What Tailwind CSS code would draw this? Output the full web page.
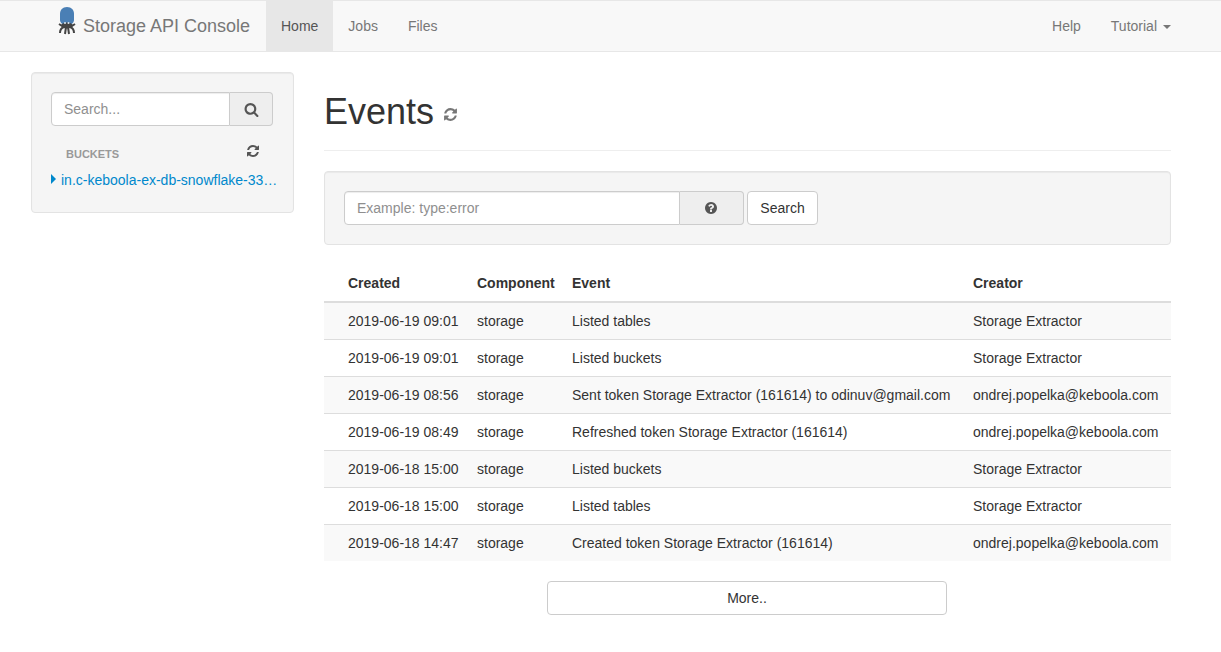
<!DOCTYPE html>
<html lang="en">
<head>
    <meta charset="UTF-8">
    <title>Storage API Console</title>
    <script src="https://cdn.jsdelivr.net/npm/@tailwindcss/browser@4"></script>
</head>
<body class="bg-white text-[#333] text-[14px] leading-[20px] font-['Liberation_Sans',Arial,sans-serif]">

<nav class="h-[52px] bg-[#f8f8f8] border-y border-[#e7e7e7] flex justify-between pl-[50px] pr-[35px] text-[#777]">
    <div class="flex">
        <div class="w-[216px] flex items-center">
            <svg class="w-[20px] h-[30px] ml-[7px] mr-[6px] -mt-[10px] shrink-0" viewBox="0 0 20 30">
                <path d="M10 1c4.500 0 7 3 7 7v6c0 3-3 5-7 5s-7-2-7-5V8c0-4 2.500-7 7-7z" fill="#4a7fb5"/>
                <ellipse cx="10" cy="19.500" rx="6" ry="3" fill="#444"/>
                <circle cx="8" cy="17" r="1" fill="#dde8f2"/>
                <circle cx="11.500" cy="17" r="1" fill="#dde8f2"/>
                <path d="M5 20L2 18M15 20l3-2M7 21C4 22 3 24 3 27M9 21l-1 7M11 21l1 7M13 21c3 1 4 3 4 6" stroke="#444" stroke-width="2" fill="none"/>
            </svg>
            <span class="text-[18px] whitespace-nowrap">Storage API Console</span>
        </div>
        <a class="px-[15px] flex items-center bg-[#e7e7e7] text-[#555]">Home</a>
        <a class="px-[15px] flex items-center">Jobs</a>
        <a class="px-[15px] flex items-center">Files</a>
    </div>
    <div class="flex">
        <a class="px-[15px] flex items-center">Help</a>
        <a class="px-[15px] flex items-center">Tutorial
            <span class="ml-[6px] mt-[2px] border-x-4 border-x-transparent border-t-4 border-t-[#777]"></span>
        </a>
    </div>
</nav>

<div class="flex items-start pt-5 pl-[31px] pr-[50px]">
    <aside class="w-[263px] h-[141px] shrink-0 bg-[#f5f5f5] border border-[#e3e3e3] rounded p-[19px] shadow-[inset_0_1px_1px_rgba(0,0,0,0.05)]">
        <div class="flex h-[34px] w-[222px]">
            <div class="flex-1 bg-white border border-[#ccc] rounded-l px-3 py-[6px] text-[#8f8f8f] shadow-[inset_0_1px_1px_rgba(0,0,0,0.075)]">Search...</div>
            <div class="w-[43px] bg-[#eee] border border-l-0 border-[#ccc] rounded-r flex items-center justify-center">
                <svg class="w-[15px] h-[15px] fill-[#555]" viewBox="0 0 1792 1792"><path d="M1216 832q0-185-131.500-316.500t-316.500-131.500-316.500 131.500-131.500 316.500 131.500 316.500 316.500 131.500 316.500-131.500 131.500-316.500zm512 832q0 52-38 90t-90 38q-54 0-90-38l-343-342q-179 124-399 124-143 0-273.500-55.500t-225-150-150-225-55.500-273.500 55.500-273.500 150-225 225-150 273.500-55.500 273.500 55.500 225 150 150 225 55.500 273.500q0 220-124 399l343 343q37 37 37 90z"/></svg>
            </div>
        </div>
        <div class="flex justify-between items-start pl-[15px] pr-[14px] mt-[15px] h-[20px]">
            <span class="text-[11px] font-bold text-[#999] uppercase mt-[3px]">Buckets</span>
            <svg class="w-[14px] h-[14px] fill-[#555] mt-[3px]" viewBox="0 0 1792 1792"><path d="M1639 1056q0 5-1 7-64 268-268 434.500t-478 166.500q-146 0-282.500-55t-243.500-157l-129 129q-19 19-45 19t-45-19-19-45v-448q0-26 19-45t45-19h448q26 0 45 19t19 45-19 45l-137 137q71 66 161 102t187 36q134 0 250-65t186-179q11-17 53-117 8-23 30-23h192q13 0 22.500 9.500t9.500 22.500zm25-800v448q0 26-19 45t-45 19h-448q-26 0-45-19t-19-45 19-45l138-138q-148-137-349-137-134 0-250 65t-186 179q-11 17-53 117-8 23-30 23h-199q-13 0-22.500-9.500t-9.500-22.500v-7q65-268 270-434.500t480-166.500q146 0 284 55.500t245 156.500l130-129q19-19 45-19t45 19 19 45z"/></svg>
        </div>
        <div class="flex items-center mt-[9px]">
            <span class="border-y-[5px] border-y-transparent border-l-[5px] border-l-[#0088cc] mr-[5px] -mt-[2px] shrink-0"></span>
            <a class="text-[#0088cc] whitespace-nowrap">in.c-keboola-ex-db-snowflake-33…</a>
        </div>
    </aside>

    <main class="ml-[30px] flex-1 min-w-0">
        <div class="h-[79px] border-b border-[#eee] flex items-start pt-5">
            <h1 class="text-[36px] leading-[40px] font-normal">Events</h1>
            <svg class="w-[15px] h-[15px] fill-[#777] ml-[9px] mt-[15px]" viewBox="0 0 1792 1792"><path d="M1639 1056q0 5-1 7-64 268-268 434.500t-478 166.500q-146 0-282.500-55t-243.500-157l-129 129q-19 19-45 19t-45-19-19-45v-448q0-26 19-45t45-19h448q26 0 45 19t19 45-19 45l-137 137q71 66 161 102t187 36q134 0 250-65t186-179q11-17 53-117 8-23 30-23h192q13 0 22.500 9.500t9.500 22.500zm25-800v448q0 26-19 45t-45 19h-448q-26 0-45-19t-19-45 19-45l138-138q-148-137-349-137-134 0-250 65t-186 179q-11 17-53 117-8 23-30 23h-199q-13 0-22.500-9.500t-9.500-22.500v-7q65-268 270-434.500t480-166.500q146 0 284 55.500t245 156.500l130-129q19-19 45-19t45 19 19 45z"/></svg>
        </div>

        <div class="mt-5 h-[74px] bg-[#f5f5f5] border border-[#e3e3e3] rounded p-[19px] flex shadow-[inset_0_1px_1px_rgba(0,0,0,0.05)]">
            <div class="flex h-[34px] w-[400px]">
                <div class="flex-1 bg-white border border-[#ccc] rounded-l px-3 py-[6px] text-[#8f8f8f] shadow-[inset_0_1px_1px_rgba(0,0,0,0.075)]">Example: type:error</div>
                <div class="w-[64px] bg-[#eee] border border-l-0 border-[#ccc] rounded-r flex items-center justify-center">
                    <svg class="w-[14px] h-[14px] fill-[#555] -ml-[1px]" viewBox="0 0 1792 1792"><path d="M1024 1376v-192q0-14-9-23t-23-9h-192q-14 0-23 9t-9 23v192q0 14 9 23t23 9h192q14 0 23-9t9-23zm256-672q0-88-55.500-163t-138.500-116-170-41q-243 0-371 213-15 24 8 42l132 100q7 6 19 6 16 0 25-12 53-68 86-92 34-24 86-24 48 0 85.500 26t37.500 59q0 38-20 61t-68 45q-63 28-115.500 86.500t-52.500 125.500v36q0 14 9 23t23 9h192q14 0 23-9t9-23q0-19 21.500-49.500t54.500-49.500q32-18 49-28.500t46-35 44.500-48 28-60.500 12.500-81zm384 192q0 209-103 385.500t-279.500 279.500-385.500 103-385.500-103-279.500-279.500-103-385.500 103-385.500 279.500-279.500 385.500-103 385.500 103 279.500 279.500 103 385.500z"/></svg>
                </div>
            </div>
            <button class="ml-[3px] h-[34px] w-[71px] bg-white border border-[#ccc] rounded">Search</button>
        </div>

        <table class="mt-5 w-[847px] table-fixed border-collapse">
            <colgroup>
                <col class="w-[145px]"><col class="w-[95px]"><col class="w-[401px]"><col class="w-[206px]">
            </colgroup>
            <thead>
                <tr class="h-[37px] border-b-2 border-[#ddd] text-left">
                    <th class="pl-6 pr-2 font-bold">Created</th>
                    <th class="px-2 font-bold">Component</th>
                    <th class="px-2 font-bold">Event</th>
                    <th class="px-2 font-bold">Creator</th>
                </tr>
            </thead>
            <tbody>
                <tr class="h-[37px] bg-[#f9f9f9] border-b border-[#ddd]">
                    <td class="pl-6 pr-2">2019-06-19 09:01</td><td class="px-2">storage</td><td class="px-2">Listed tables</td><td class="px-2">Storage Extractor</td>
                </tr>
                <tr class="h-[37px] border-b border-[#ddd]">
                    <td class="pl-6 pr-2">2019-06-19 09:01</td><td class="px-2">storage</td><td class="px-2">Listed buckets</td><td class="px-2">Storage Extractor</td>
                </tr>
                <tr class="h-[37px] bg-[#f9f9f9] border-b border-[#ddd]">
                    <td class="pl-6 pr-2">2019-06-19 08:56</td><td class="px-2">storage</td><td class="px-2">Sent token Storage Extractor (161614) to odinuv@gmail.com</td><td class="px-2">ondrej.popelka@keboola.com</td>
                </tr>
                <tr class="h-[37px] border-b border-[#ddd]">
                    <td class="pl-6 pr-2">2019-06-19 08:49</td><td class="px-2">storage</td><td class="px-2">Refreshed token Storage Extractor (161614)</td><td class="px-2">ondrej.popelka@keboola.com</td>
                </tr>
                <tr class="h-[37px] bg-[#f9f9f9] border-b border-[#ddd]">
                    <td class="pl-6 pr-2">2019-06-18 15:00</td><td class="px-2">storage</td><td class="px-2">Listed buckets</td><td class="px-2">Storage Extractor</td>
                </tr>
                <tr class="h-[37px] border-b border-[#ddd]">
                    <td class="pl-6 pr-2">2019-06-18 15:00</td><td class="px-2">storage</td><td class="px-2">Listed tables</td><td class="px-2">Storage Extractor</td>
                </tr>
                <tr class="h-[37px] bg-[#f9f9f9]">
                    <td class="pl-6 pr-2">2019-06-18 14:47</td><td class="px-2">storage</td><td class="px-2">Created token Storage Extractor (161614)</td><td class="px-2">ondrej.popelka@keboola.com</td>
                </tr>
            </tbody>
        </table>

        <button class="block ml-[223px] mt-5 w-[400px] h-[34px] bg-white border border-[#ccc] rounded">More..</button>
    </main>
</div>
</body>
</html>
